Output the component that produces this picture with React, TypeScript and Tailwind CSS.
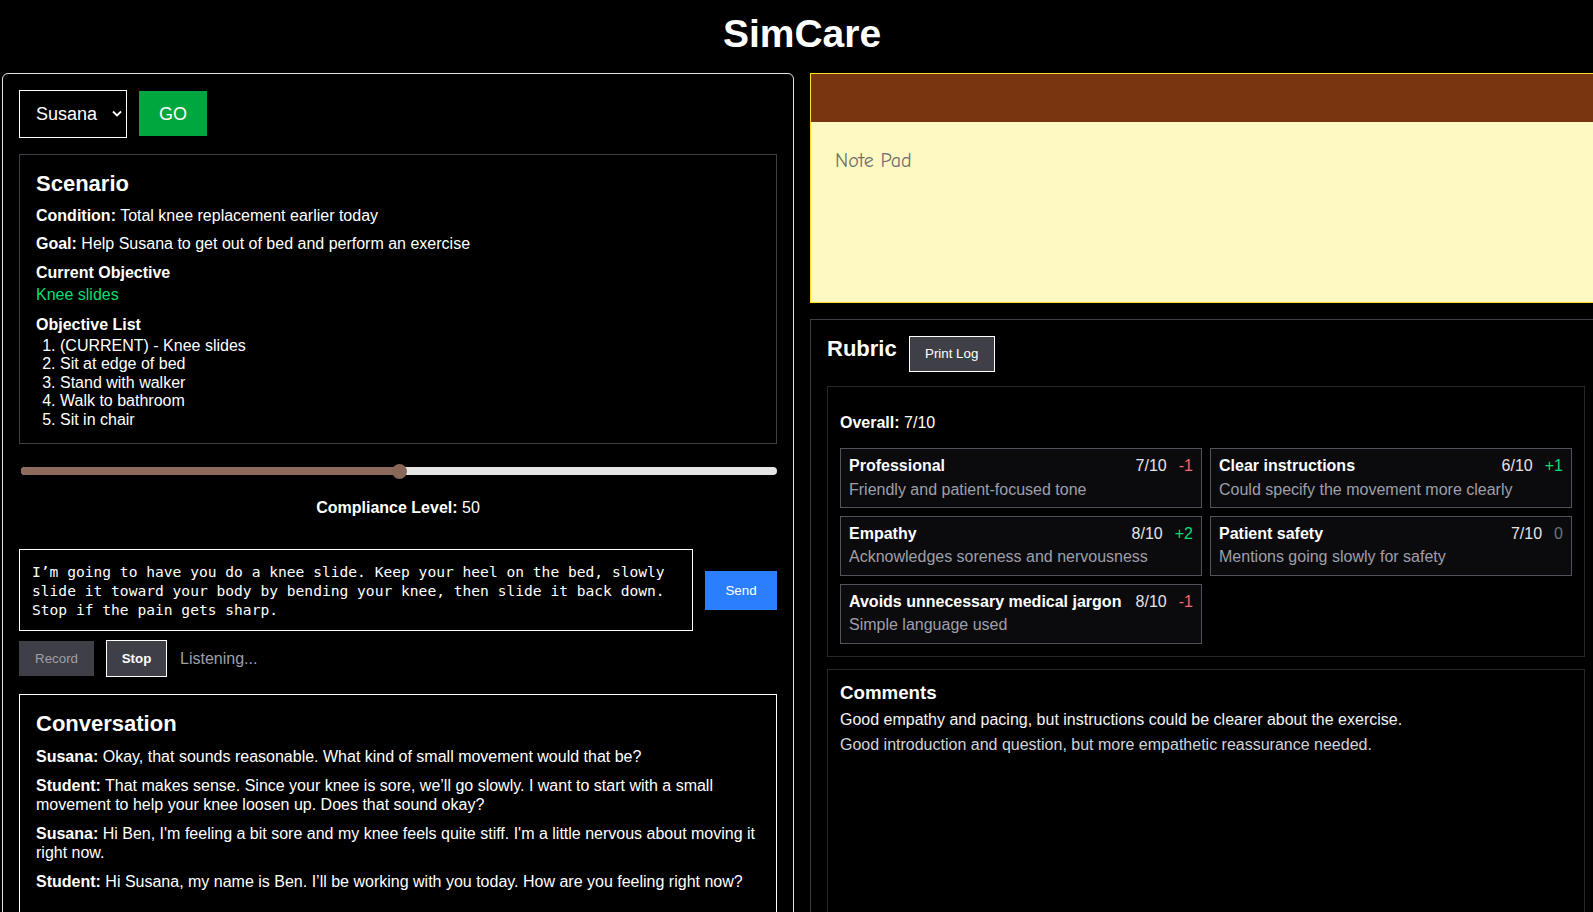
import React, { useState } from 'react';

interface RubricItem {
  title: string;
  score: number;
  delta: number;
  note: string;
}

const OBJECTIVES = [
  '(CURRENT) - Knee slides',
  'Sit at edge of bed',
  'Stand with walker',
  'Walk to bathroom',
  'Sit in chair',
];

const MESSAGES = [
  { who: 'Susana', text: 'Okay, that sounds reasonable. What kind of small movement would that be?' },
  {
    who: 'Student',
    text: 'That makes sense. Since your knee is sore, we’ll go slowly. I want to start with a small movement to help your knee loosen up. Does that sound okay?',
  },
  {
    who: 'Susana',
    text: "Hi Ben, I'm feeling a bit sore and my knee feels quite stiff. I'm a little nervous about moving it right now.",
  },
  { who: 'Student', text: 'Hi Susana, my name is Ben. I’ll be working with you today. How are you feeling right now?' },
];

const RUBRIC: RubricItem[] = [
  { title: 'Professional', score: 7, delta: -1, note: 'Friendly and patient-focused tone' },
  { title: 'Clear instructions', score: 6, delta: 1, note: 'Could specify the movement more clearly' },
  { title: 'Empathy', score: 8, delta: 2, note: 'Acknowledges soreness and nervousness' },
  { title: 'Patient safety', score: 7, delta: 0, note: 'Mentions going slowly for safety' },
  { title: 'Avoids unnecessary medical jargon', score: 8, delta: -1, note: 'Simple language used' },
];

const RubricCard: React.FC<{ item: RubricItem }> = ({ item }) => {
  const deltaClass =
    item.delta > 0 ? 'text-green-400' : item.delta < 0 ? 'text-red-400' : 'text-zinc-500';
  const deltaText = item.delta > 0 ? `+${item.delta}` : `${item.delta}`;
  return (
    <div className="border border-zinc-600 bg-[#0b0b0e] p-2">
      <div className="flex items-baseline justify-between gap-3">
        <span className="font-bold text-white">{item.title}</span>
        <span className="flex gap-3 whitespace-nowrap">
          <span className="text-zinc-200">{item.score}/10</span>
          <span className={deltaClass}>{deltaText}</span>
        </span>
      </div>
      <p className="mt-[5px] text-zinc-400">{item.note}</p>
    </div>
  );
};

export default function App() {
  const [compliance] = useState(50);
  const [draft, setDraft] = useState(
    'I’m going to have you do a knee slide. Keep your heel on the bed, slowly slide it toward your body by bending your knee, then slide it back down. Stop if the pain gets sharp.'
  );

  return (
    <div className="h-screen w-screen overflow-hidden bg-black font-['Liberation_Sans',Arial,sans-serif] text-[16px] leading-[1.15] text-white">
      <div className="w-[1604px] px-[2px]">
        <h1 className="pt-[12px] pb-[16px] text-center text-[39px] font-bold leading-[1.15]">SimCare</h1>

        <div className="grid grid-cols-[792px_792px] gap-4">
          {/* Left column */}
          <div className="rounded-md border border-zinc-200 p-4">
            <div className="flex items-center gap-3">
              <div className="relative">
                <select className="h-[48px] w-[108px] appearance-none border border-white bg-black pl-4 text-[18px] text-white outline-none">
                  <option>Susana</option>
                </select>
                <svg
                  className="pointer-events-none absolute right-[5px] top-[20px] h-[7px] w-[10px]"
                  viewBox="0 0 10 7"
                  fill="none"
                  stroke="white"
                  strokeWidth={1.8}
                >
                  <path d="M1 1.5l4 4 4-4" />
                </svg>
              </div>
              <button className="h-[45px] w-[68px] bg-green-600 text-[18px] text-white">GO</button>
            </div>

            {/* Scenario */}
            <div className="mt-4 border border-zinc-700 px-4 pt-4 pb-[14px]">
              <h2 className="text-[22px] font-bold">Scenario</h2>
              <p className="mt-[11px]">
                <b>Condition:</b> Total knee replacement earlier today
              </p>
              <p className="mt-[9px]">
                <b>Goal:</b> Help Susana to get out of bed and perform an exercise
              </p>
              <p className="mt-[11px] font-bold">Current Objective</p>
              <p className="mt-[4px] text-green-400">Knee slides</p>
              <p className="mt-[11px] font-bold">Objective List</p>
              <ol className="mt-[3px] list-decimal pl-6">
                {OBJECTIVES.map((o) => (
                  <li key={o}>{o}</li>
                ))}
              </ol>
            </div>

            {/* Compliance slider */}
            <div className="relative mt-[19px] ml-[2px] h-4">
              <div className="absolute inset-x-0 top-1 h-2 rounded-full bg-[#e5e5e5]" />
              <div
                className="absolute left-0 top-1 h-2 rounded-full bg-[#8c6a5c]"
                style={{ width: `${compliance}%` }}
              />
              <div
                className="absolute top-[0.5px] h-[15px] w-[15px] rounded-full bg-[#8a6859]"
                style={{ left: `calc(${compliance}% - 7.5px)` }}
              />
            </div>
            <p className="mt-[20px] text-center">
              <b>Compliance Level:</b> {compliance}
            </p>

            {/* Message input */}
            <div className="mt-[32px] flex items-center gap-3">
              <textarea
                value={draft}
                onChange={(e) => setDraft(e.target.value)}
                className="block h-[82px] flex-1 resize-none overflow-hidden border border-white bg-black px-3 pt-[12px] pb-[10px] font-['DejaVu_Sans_Mono',monospace] text-[14.6px] leading-[19px] text-white outline-none"
              />
              <button className="h-[39px] w-[72px] bg-blue-500 text-[13.33px] text-white">Send</button>
            </div>

            <div className="mt-[9px] flex items-center gap-3">
              <button className="h-[35px] w-[75px] bg-zinc-700 text-[13.33px] text-zinc-400">Record</button>
              <button className="h-[37px] w-[61px] border border-white bg-zinc-700 text-[13.33px] font-bold text-white">
                Stop
              </button>
              <span className="ml-[1px] text-zinc-400">Listening...</span>
            </div>

            {/* Conversation */}
            <div className="mt-[17px] min-h-[320px] border border-white p-4">
              <h2 className="text-[22px] font-bold">Conversation</h2>
              {MESSAGES.map((m, i) => (
                <p key={i} className="mt-[10px] leading-[19px]">
                  <b>{m.who}:</b> {m.text}
                </p>
              ))}
            </div>
          </div>

          {/* Right column */}
          <div>
            <div className="border border-yellow-300 bg-[#fef9c3]">
              <div className="h-[48px] bg-[#78350f]" />
              <textarea
                placeholder="Note Pad"
                className="block h-[180px] w-full resize-none bg-transparent px-6 pt-[27px] font-['Comic_Sans_MS','Comic_Neue',cursive] text-[20px] leading-[23px] text-zinc-800 outline-none placeholder:text-[#6e6e6e]"
              />
            </div>

            <div className="mt-4 border border-zinc-700 p-4">
              <div className="flex items-start gap-3">
                <h2 className="text-[22px] font-bold">Rubric</h2>
                <button className="h-[36px] w-[86px] border border-white bg-zinc-700 text-[13.33px] text-white">
                  Print Log
                </button>
              </div>

              <div className="mt-[14px] border border-zinc-800 p-3">
                <p className="mt-[15px]">
                  <b>Overall:</b> 7/10
                </p>
                <div className="mt-[16px] grid grid-cols-2 gap-2">
                  {RUBRIC.map((r) => (
                    <RubricCard key={r.title} item={r} />
                  ))}
                </div>
              </div>

              <div className="mt-3 min-h-[320px] border border-zinc-800 p-3">
                <h3 className="text-[18.72px] font-bold">Comments</h3>
                <p className="mt-[8px] text-zinc-100">
                  Good empathy and pacing, but instructions could be clearer about the exercise.
                </p>
                <p className="mt-[7px] text-zinc-300">
                  Good introduction and question, but more empathetic reassurance needed.
                </p>
              </div>
            </div>
          </div>
        </div>
      </div>
    </div>
  );
}
